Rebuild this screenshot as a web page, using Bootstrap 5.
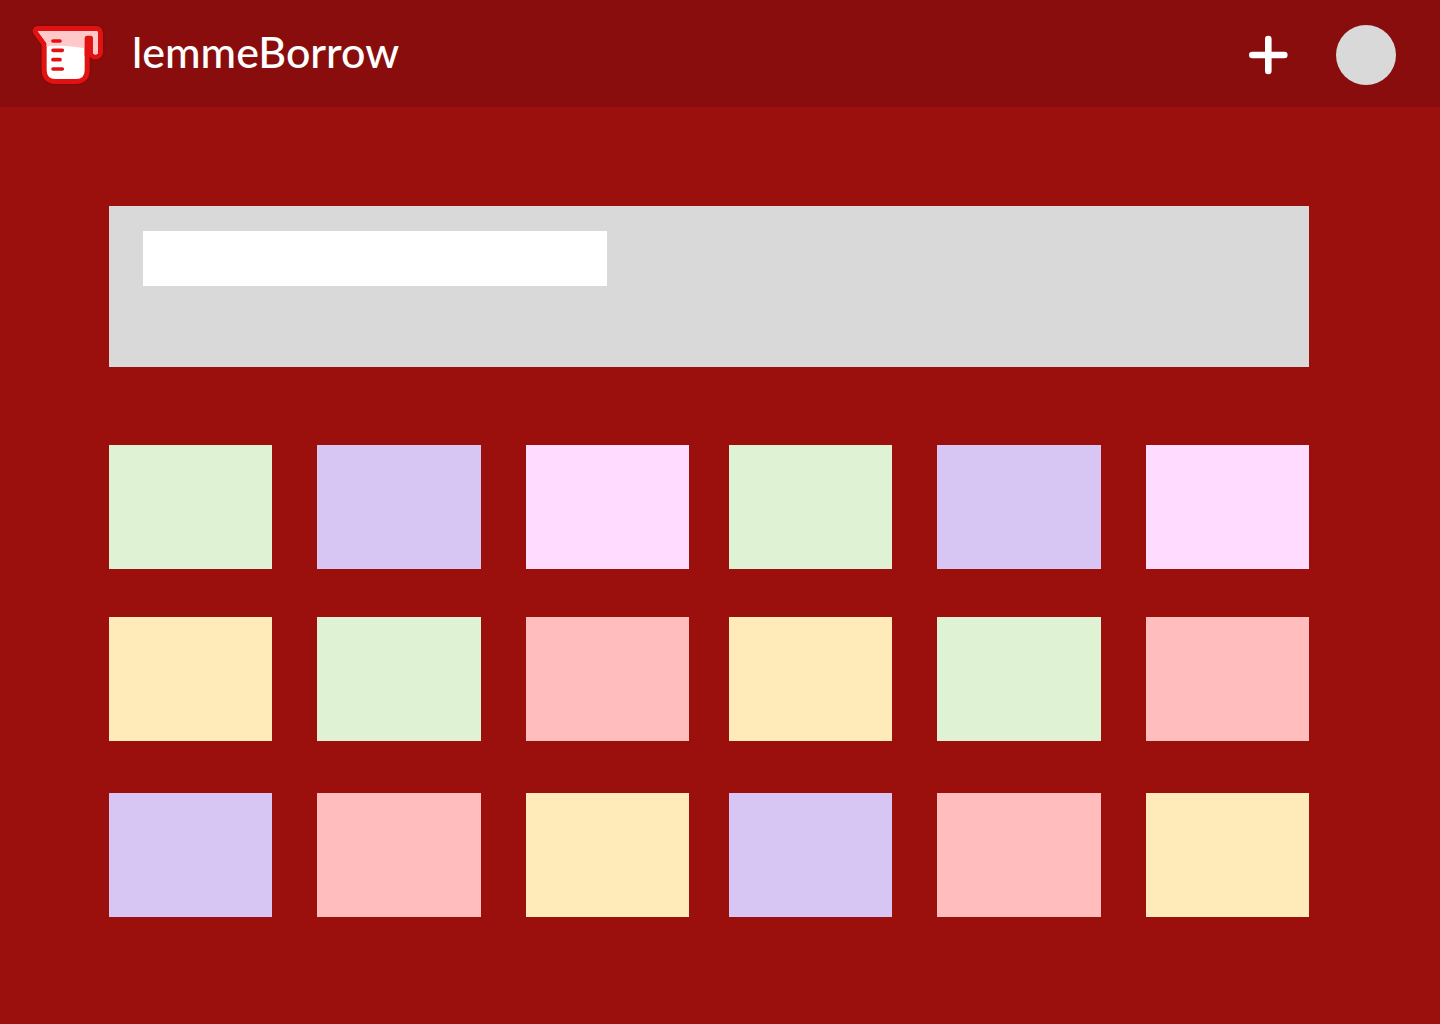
<!DOCTYPE html>
<html lang="en">
<head>
<meta charset="utf-8">
<meta name="viewport" content="width=device-width, initial-scale=1">
<title>lemmeBorrow</title>
<link rel="stylesheet" href="https://cdn.jsdelivr.net/npm/bootstrap@5.3.0/dist/css/bootstrap.min.css">
<style>
  body { background: #9b0f0d; font-family: Lato, "Open Sans", sans-serif; }
  .site-bar { background: #890d0d; height: 107px; padding: 0 44px 0 24px; }
  .brand-name { font-size: 43px; line-height: 52px; font-weight: 500; margin-left: 18px; padding-bottom: 3px; }
  .add-btn { width: 40px; height: 40px; }
  .avatar-btn { width: 60px; height: 60px; background: #d9d9d9; }
  .bar-actions { gap: 48px; padding-top: 3px; }
  .page-body { padding: 99px 131px 107px 109px; }
  .search-panel { background: #d9d9d9; min-height: 161px; padding: 25px 34px; margin-bottom: 78px; }
  .search-box { max-width: 464px; height: 55px; }
  .shelf { --bs-gutter-x: 40px; }
  .shelf-2 { margin-top: 48px; }
  .shelf-3 { margin-top: 52px; }
  .trio { --bs-gutter-x: 45px; }
  .tile { height: 124px; }
  .green { background: #dff2d3; }
  .violet { background: #d7c6f3; }
  .orchid { background: #ffdbff; }
  .cream { background: #ffebba; }
  .coral { background: #ffbdbd; }
</style>
<script src="https://cdn.jsdelivr.net/npm/bootstrap@5.3.0/dist/js/bootstrap.bundle.min.js" defer></script>
</head>
<body>
<header class="site-bar d-flex align-items-center justify-content-between">
  <a href="#" class="d-flex align-items-center text-white text-decoration-none">
    <svg width="90" height="76" viewBox="0 0 270 228" aria-hidden="true">
      <defs>
        <path id="jug" d="M41 45H216Q222 45 222 52V108A7.500 7.500 0 0 1 207 108V68Q207 59 199 59H190Q182 59 182 68V163Q182 189 156 189H94Q68 189 68 163V82Z"/>
        <clipPath id="jug-clip"><use href="#jug"/></clipPath>
      </defs>
      <use href="#jug" fill="none" stroke="#6f0909" stroke-opacity=".35" stroke-width="38" stroke-linejoin="round"/>
      <use href="#jug" fill="#fff" stroke="#e31212" stroke-width="30" stroke-linejoin="round"/>
      <use href="#jug" fill="#fff"/>
      <path clip-path="url(#jug-clip)" fill="#ffc9c9" d="M30 30H230V125H200V102Q130 84 60 92Z"/>
      <path d="M182 68Q182 59 190 59H199Q207 59 207 68V120H182Z" fill="#e31212"/>
      <path d="M87 75H108M87 103H115M87 131H108M87 159H115" stroke="#e31212" stroke-width="11" stroke-linecap="round"/>
    </svg>
    <span class="brand-name">lemmeBorrow</span>
  </a>
  <div class="bar-actions d-flex align-items-center">
    <button type="button" class="add-btn btn p-0 border-0 d-flex" aria-label="Add item">
      <svg width="40" height="40" viewBox="0 0 40 40" aria-hidden="true">
        <path d="M20.300 4V36M4.300 20H36.300" stroke="#fff" stroke-width="6.600" stroke-linecap="round"/>
      </svg>
    </button>
    <button type="button" class="avatar-btn btn p-0 border-0 rounded-circle" aria-label="Account"></button>
  </div>
</header>
<main class="page-body">
  <form class="search-panel" role="search">
    <input type="search" class="search-box form-control border-0 rounded-0 bg-white" aria-label="Search items">
  </form>
  <div class="row shelf">
    <div class="col-6"><div class="row trio">
      <div class="col-4"><div class="tile green"></div></div>
      <div class="col-4"><div class="tile violet"></div></div>
      <div class="col-4"><div class="tile orchid"></div></div>
    </div></div>
    <div class="col-6"><div class="row trio">
      <div class="col-4"><div class="tile green"></div></div>
      <div class="col-4"><div class="tile violet"></div></div>
      <div class="col-4"><div class="tile orchid"></div></div>
    </div></div>
  </div>
  <div class="row shelf shelf-2">
    <div class="col-6"><div class="row trio">
      <div class="col-4"><div class="tile cream"></div></div>
      <div class="col-4"><div class="tile green"></div></div>
      <div class="col-4"><div class="tile coral"></div></div>
    </div></div>
    <div class="col-6"><div class="row trio">
      <div class="col-4"><div class="tile cream"></div></div>
      <div class="col-4"><div class="tile green"></div></div>
      <div class="col-4"><div class="tile coral"></div></div>
    </div></div>
  </div>
  <div class="row shelf shelf-3">
    <div class="col-6"><div class="row trio">
      <div class="col-4"><div class="tile violet"></div></div>
      <div class="col-4"><div class="tile coral"></div></div>
      <div class="col-4"><div class="tile cream"></div></div>
    </div></div>
    <div class="col-6"><div class="row trio">
      <div class="col-4"><div class="tile violet"></div></div>
      <div class="col-4"><div class="tile coral"></div></div>
      <div class="col-4"><div class="tile cream"></div></div>
    </div></div>
  </div>
</main>
</body>
</html>
